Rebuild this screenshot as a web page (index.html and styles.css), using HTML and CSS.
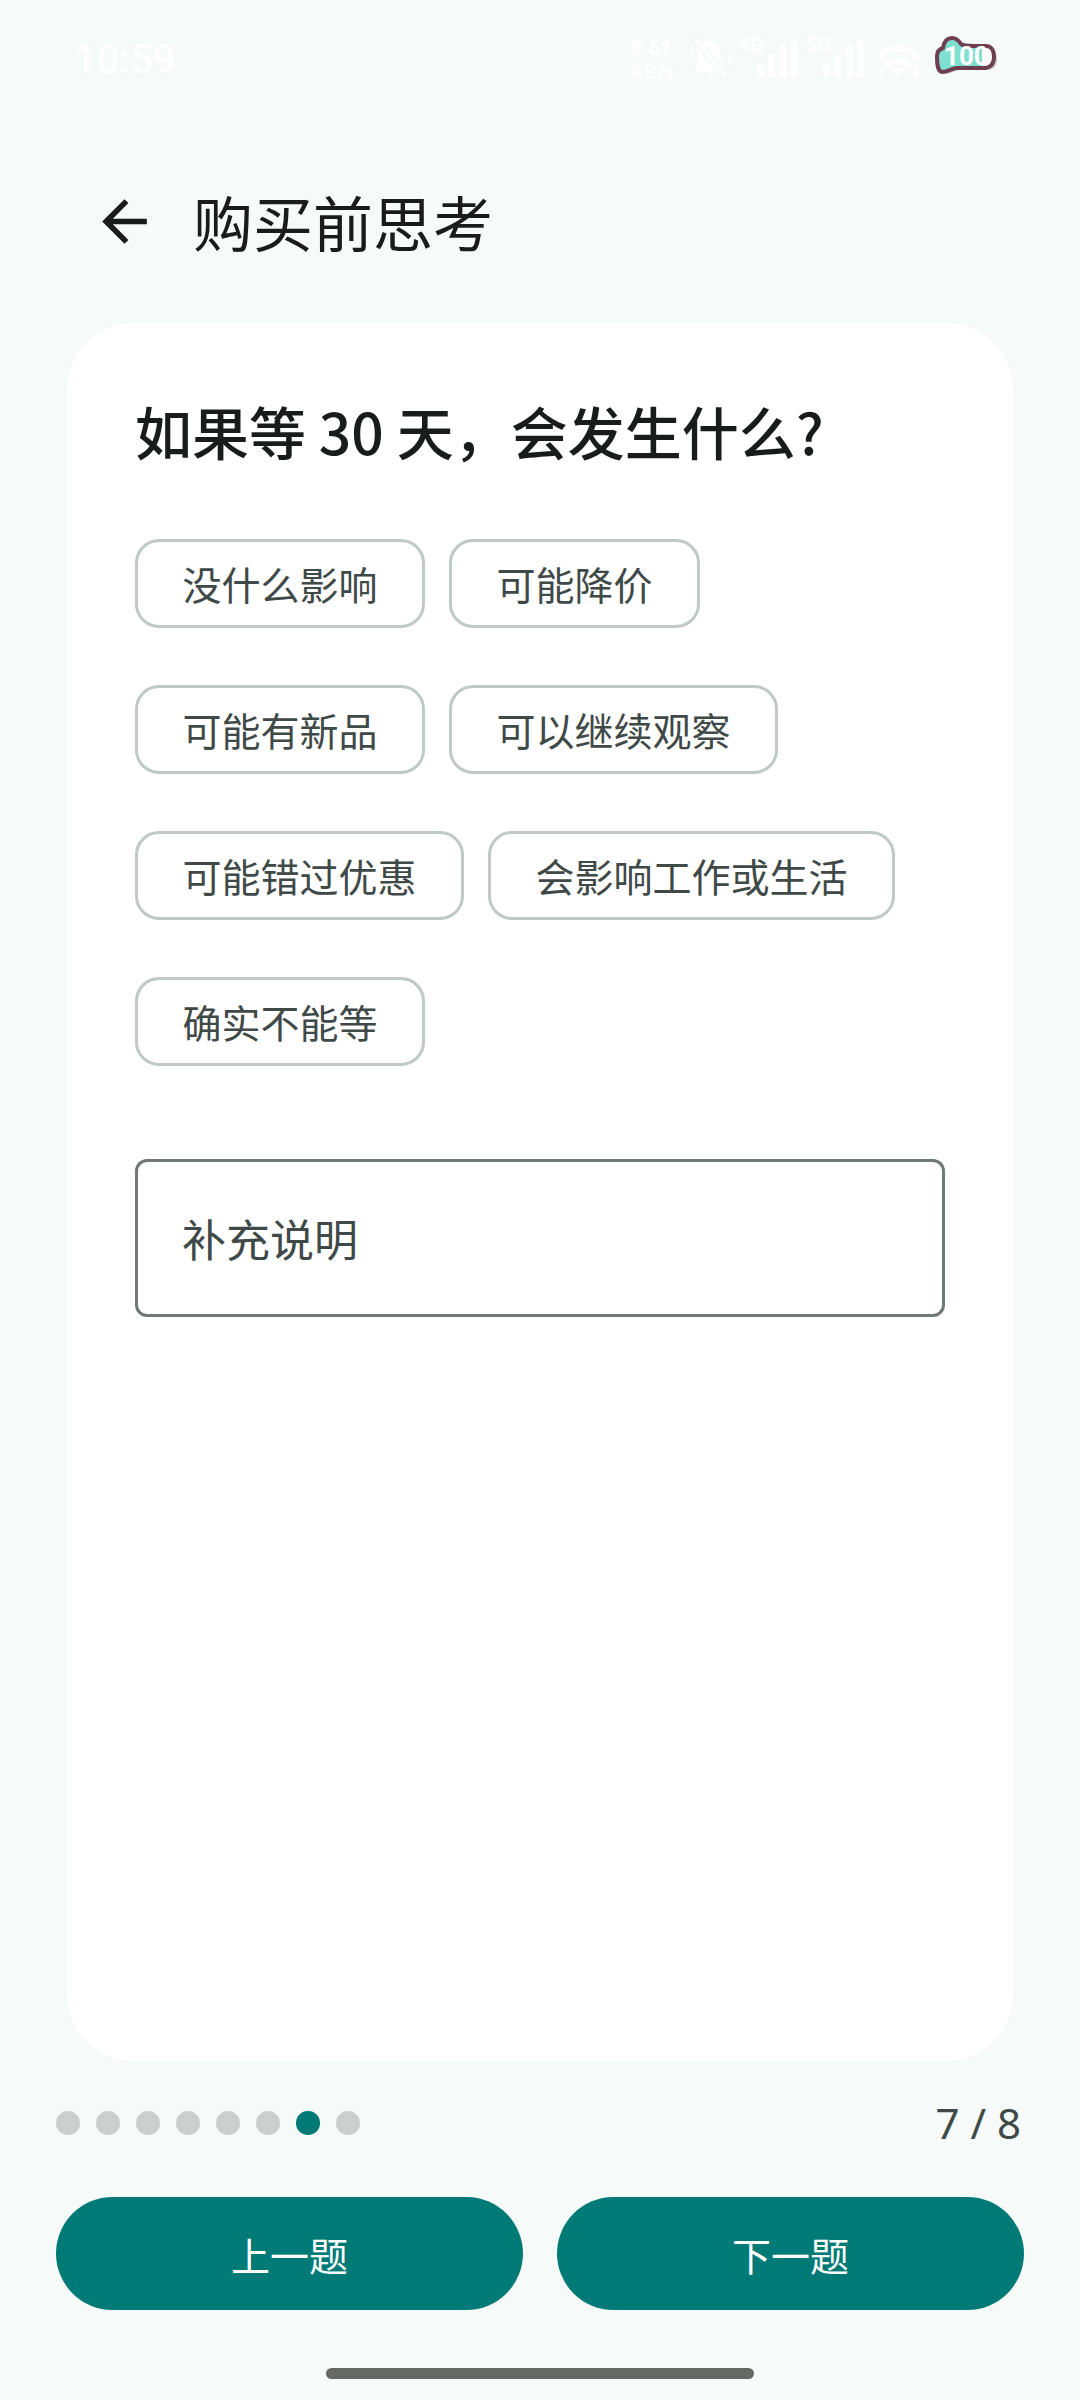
FILE: index.html
```html
<!DOCTYPE html>
<html lang="zh-CN">
<head>
<meta charset="utf-8">
<title>购买前思考</title>
<link rel="stylesheet" href="styles.css">
</head>
<body>
<div class="page">
  <div class="status">
    <span class="time">10:59</span>
    <div class="status-icons">
      <div class="speed"><span>0.61</span><span>KB/s</span></div>
      <svg class="ic-bell" viewBox="0 0 43 40" fill="#fff">
        <path d="M21 4c5 0 9 3 10 9l3 14L13 6c2-1.400 5-2 8-2zM9 12l19 23H5l3-6c1-2 1-3 1-6zM17 36h8l-4 4zM1 8l3 4-2 4 2 4-2 4 2-3 0-4-2-4 2-3zM41 16l-2 3 2 4-2 4 1 2 3-5-2-4 2-3z"/>
        <path d="M6 1l30 38" stroke="#fff" stroke-width="3"/>
      </svg>
      <svg class="ic-signal" viewBox="0 0 60 40" fill="#fff">
        <text class="net" x="0" y="15">4G</text>
        <rect x="18" y="26" width="7" height="14" rx="2"/><rect x="29" y="18" width="7" height="22" rx="2"/><rect x="41" y="8" width="7" height="32" rx="2"/><rect x="52" y="4" width="7" height="36" rx="2"/>
      </svg>
      <svg class="ic-signal sig2" viewBox="0 0 60 40" fill="#fff">
        <text class="net" x="0" y="15">5G</text>
        <rect x="18" y="26" width="7" height="14" rx="2"/><rect x="29" y="18" width="7" height="22" rx="2"/><rect x="41" y="8" width="7" height="32" rx="2"/><rect x="52" y="4" width="7" height="36" rx="2"/>
      </svg>
      <svg class="ic-wifi" viewBox="0 0 45 32" fill="none" stroke="#fff" stroke-width="6">
        <path d="M2 14C14 1 31 1 43 14"/>
        <path d="M10 22c8-7 17-7 25 0"/>
        <path d="M22 32l-6-6c4-2 8-2 12 0z" fill="#fff" stroke="none"/>
        <path d="M1 26h7v3l-3 3-4-3zM38 22h6l-2 10h-4z" fill="#fff" stroke="none"/>
      </svg>
      <div class="battery">
        <svg viewBox="0 0 66 44">
          <path class="cl-shadow" d="M6 22c0-5 3-7 6-8 1-6 4-10 9-10 4 0 7 3 9 6 2 2 5 2 13 2h12c5 0 8 4 8 11s-3 10-8 11H26c-5 0-9 4-15 4-4-1-5-6-5-16z"/>
          <path class="cl-white" d="M3 20c0-5 3-7 6-8 1-6 4-10 9-10 4 0 7 3 9 6 2 2 5 2 13 2h12c5 0 8 4 8 11s-3 10-8 11H23c-5 0-9 4-15 4-4-1-5-6-5-16z"/>
          <path class="cl-fill" d="M3 20c0-5 3-7 6-8 1-6 4-10 9-10 4 0 7 3 9 6 2 2 5 2 13 2h8v22H23c-5 0-9 4-15 4-4-1-5-6-5-16z"/>
          <path class="cl-line" d="M3 20c0-5 3-7 6-8 1-6 4-10 9-10 4 0 7 3 9 6 2 2 5 2 13 2h12c5 0 8 4 8 11s-3 10-8 11H23c-5 0-9 4-15 4-4-1-5-6-5-16z"/>
          <text class="cl-text" x="10" y="29">100</text>
        </svg>
      </div>
    </div>
  </div>

  <header class="appbar">
    <svg class="back" viewBox="0 0 24 24"><path d="M20 11H7.830l5.590-5.590L12 4l-8 8 8 8 1.410-1.410L7.830 13H20v-2z"/></svg>
    <h1 class="title">购买前思考</h1>
  </header>

  <main class="card">
    <h2 class="question">如果等 30 天，会发生什么?</h2>
    <div class="chips">
      <span class="chip">没什么影响</span>
      <span class="chip">可能降价</span>
      <span class="chip">可能有新品</span>
      <span class="chip">可以继续观察</span>
      <span class="chip">可能错过优惠</span>
      <span class="chip">会影响工作或生活</span>
      <span class="chip">确实不能等</span>
    </div>
    <div class="field">补充说明</div>
  </main>

  <div class="progress">
    <div class="dots">
      <i class="dot"></i><i class="dot"></i><i class="dot"></i><i class="dot"></i><i class="dot"></i><i class="dot"></i><i class="dot active"></i><i class="dot"></i>
    </div>
    <span class="count">7 / 8</span>
  </div>

  <div class="actions">
    <button class="btn">上一题</button>
    <button class="btn">下一题</button>
  </div>

  <div class="home-wrap"><div class="home"></div></div>
</div>
</body>
</html>
```
FILE: styles.css
```css
* { box-sizing: border-box; }
html, body { margin: 0; padding: 0; }
body {
  background: #f6fbf9;
  font-family: "Noto Sans CJK SC", "Noto Sans", sans-serif;
  color: #191c1b;
}
.page {
  width: 1080px;
  height: 2400px;
  display: flex;
  flex-direction: column;
  overflow: hidden;
}
.status {
  height: 120px;
  display: flex;
  align-items: flex-start;
  justify-content: space-between;
  padding: 36px 80px 0 74px;
  color: #fff;
}
.time {
  font-family: "Roboto", sans-serif;
  font-size: 40px;
  font-weight: 500;
  line-height: 48px;
  margin-top: 0;
}
.status-icons {
  display: flex;
  align-items: flex-start;
  height: 44px;
}
.speed {
  display: flex;
  flex-direction: column;
  width: 44px;
  margin-right: 14px;
  font-family: "Roboto", sans-serif;
  font-size: 20px;
  font-weight: 700;
  line-height: 24px;
}
.ic-bell { width: 43px; height: 40px; margin-top: 1px; margin-right: 7px; }
.ic-signal { width: 60px; height: 40px; margin-top: 1px; }
.sig2 { margin-left: 6px; margin-right: 11px; }
.net { font: 700 20px "Roboto", sans-serif; }
.ic-wifi { width: 45px; height: 32px; margin-top: 8px; margin-right: 13px; }
.battery { width: 66px; height: 44px; }
.battery svg { display: block; width: 66px; height: 44px; }
.cl-shadow { fill: #c9cdcc; }
.cl-white { fill: #fff; }
.cl-fill { fill: #7fe0cf; }
.cl-line { fill: none; stroke: #6f3f50; stroke-width: 4; }
.cl-text { fill: #fff; font: 700 26px "Roboto", sans-serif; }

.appbar {
  height: 203px;
  display: flex;
  align-items: flex-start;
  padding: 68px 0 0 91px;
}
.back { width: 67px; height: 67px; fill: #191c1b; flex: none; }
.title {
  margin: 0 0 0 35px;
  font-size: 60px;
  font-weight: 400;
  line-height: 68px;
  margin-top: -1px;
}
.card {
  flex: 1;
  margin: 0 67px;
  background: #fff;
  border-radius: 66px;
  padding: 66px 68px 0;
  min-height: 0;
}
.question {
  margin: 0 0 0 0;
  font-size: 57px;
  font-weight: 500;
  line-height: 82px;
}
.chips {
  display: flex;
  flex-wrap: wrap;
  gap: 57px 24px;
  margin-top: 68px;
}
.chip {
  display: flex;
  align-items: center;
  height: 89px;
  padding: 0 44.5px;
  border: 3px solid #bfc9c6;
  border-radius: 24px;
  font-size: 39px;
  line-height: 1;
  color: #3f4947;
}
.field {
  display: flex;
  align-items: center;
  height: 158px;
  margin-top: 93px;
  padding-left: 44px;
  border: 3px solid #6f7977;
  border-radius: 12px;
  font-size: 44px;
  color: #3f4947;
}
.progress {
  height: 136px;
  flex: none;
  display: flex;
  align-items: center;
  justify-content: space-between;
  padding: 0 59px 12px 56px;
}
.dots { display: flex; gap: 16.5px; }
.dot { display: block; width: 23.500px; height: 23.500px; border-radius: 50%; background: #cbcfce; }
.dot.active { background: #007a76; }
.count {
  font-family: "Noto Sans", sans-serif;
  font-size: 42px;
  color: #3f4947;
  line-height: 1;
}
.actions {
  flex: none;
  display: flex;
  gap: 34px;
  padding: 0 56px;
}
.btn {
  flex: 1;
  height: 113px;
  border: 0;
  border-radius: 57px;
  background: #007a76;
  color: #fff;
  font-family: "Noto Sans CJK SC", sans-serif;
  font-size: 39px;
  font-weight: 400;
}
.home-wrap {
  flex: none;
  height: 90px;
  padding-top: 58px;
  display: flex;
  justify-content: center;
}
.home {
  width: 428px;
  height: 11px;
  border-radius: 6px;
  background: #666866;
}
```
